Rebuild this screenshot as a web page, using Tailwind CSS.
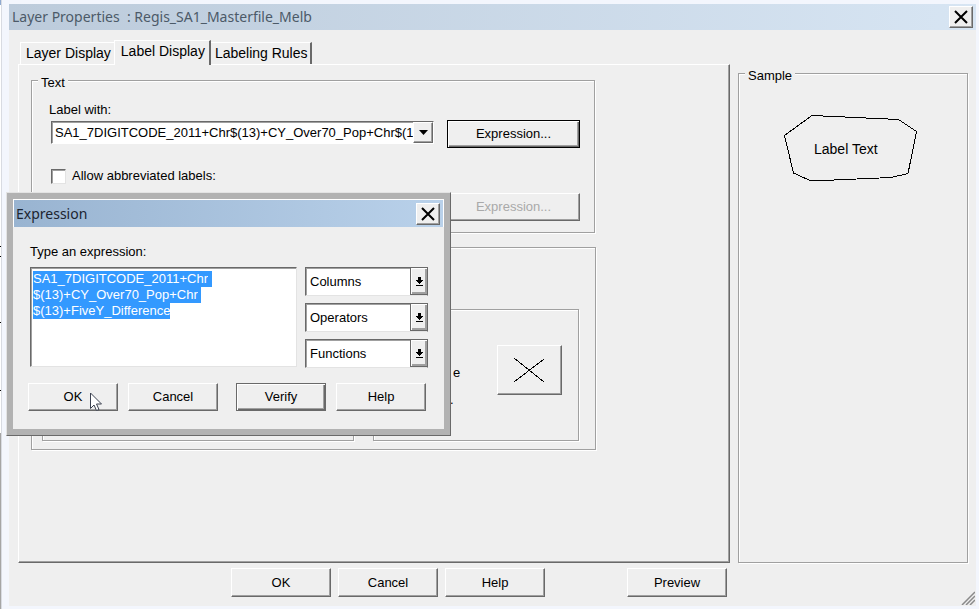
<!DOCTYPE html>
<html lang="en">

<head>
    <title>Layer Properties</title>

    <meta charset="UTF-8" />
    <meta name="viewport" content="width=device-width, initial-scale=1.0" />
    <script src="https://cdn.jsdelivr.net/npm/@tailwindcss/browser@4"></script>
</head>

<body class="min-h-screen flex bg-[#f3f6fd] font-['Liberation_Sans',Arial,sans-serif] text-[13px] leading-4 text-black overflow-hidden">
    <!-- edge of the window behind -->
    <div class="w-[2px] shrink-0 bg-white border-r border-[#d8dbe2] flex flex-col">
        <div class="h-[5px] bg-[#8fa9cf]"></div>
        <div class="mt-[241px] h-px bg-black"></div>
        <div class="mt-[9px] h-px bg-black"></div>
        <div class="mt-[65px] h-px bg-black"></div>
        <div class="mt-[67px] h-px bg-black"></div>
        <div class="mt-[42px] grow bg-[#a5a5a5]"></div>
    </div>

    <main class="relative grow flex flex-col mt-1 ml-[7px] mr-[3px] mb-[3px] bg-[#efefef]">
        <header class="h-[26px] flex items-center justify-between px-[3px] bg-linear-to-r from-[#bccbdb] to-[#d7e5f3] font-['Noto_Sans','Open_Sans',sans-serif] text-[14px] text-[#4c5a68]">
            <h1 class="whitespace-pre">Layer Properties  : Regis_SA1_Masterfile_Melb</h1>
            <button type="button" aria-label="Close" class="w-6 h-[22px] flex items-center justify-center bg-[#efefef] border border-t-white border-l-white border-r-[#696969] border-b-[#696969] shadow-[inset_-1px_-1px_0_#a0a0a0]">
                <svg class="size-[14px]" viewBox="0 0 14 14" stroke="#000" stroke-width="2" fill="none"><path d="M1 1l12 12M13 1L1 13" /></svg>
            </button>
        </header>

        <div class="grow flex pl-[9px] pr-2 pt-[10px]">
            <div class="grow flex flex-col">
                <div role="tablist" class="flex items-end h-6 pl-[2px]">
                    <button type="button" role="tab" class="h-[22px] pb-px pl-[5px] pr-[3px] text-[14px] border-t border-l border-white">Layer Display</button>
                    <button type="button" role="tab" aria-selected="true" class="relative z-10 h-[25px] -mb-px pb-1 pl-[6px] pr-1 text-[14px] bg-[#efefef] border-t border-l border-t-white border-l-white border-r-2 border-r-[#696969]">Label Display</button>
                    <button type="button" role="tab" class="h-[22px] pb-px pl-1 pr-[2px] text-[14px] border-t border-t-white border-r-2 border-r-[#696969]">Labeling Rules</button>
                </div>

                <section class="grow flex flex-col items-start pl-3 pt-[15px] border border-t-white border-l-white border-r-[#696969] border-b-[#696969] shadow-[inset_-1px_-1px_0_#a0a0a0]">
                    <fieldset class="relative w-[564px] h-[153px] pl-[17px] border border-[#a0a0a0] shadow-[1px_1px_0_#fff,inset_1px_1px_0_#fff]">
                        <legend class="absolute -top-[6px] left-[6px] px-[3px] bg-[#efefef]">Text</legend>
                        <label for="label-with" class="block mt-[21px]">Label with:</label>
                        <div class="flex items-start mt-[2px] pl-[2px]">
                            <div class="flex w-[383px] h-[23px] mt-px bg-white border border-t-[#696969] border-l-[#696969] border-r-white border-b-white shadow-[inset_1px_1px_0_#a0a0a0]">
                                <select id="label-with" class="appearance-none grow min-w-0 pl-[3px] outline-none">
                                    <option>SA1_7DIGITCODE_2011+Chr$(13)+CY_Over70_Pop+Chr$(13)+FiveY_Difference</option>
                                </select>
                                <span class="w-5 h-[21px] shrink-0 flex items-center justify-center bg-[#efefef] border border-t-white border-l-white border-r-[#696969] border-b-[#696969] shadow-[inset_-1px_-1px_0_#a0a0a0]">
                                    <svg class="w-[9px] h-[5px]" viewBox="0 0 9 5"><path d="M0 0h9L4.500 5z" /></svg>
                                </span>
                            </div>
                            <button type="button" class="w-[133px] h-7 ml-[13px] border border-black shadow-[inset_1px_1px_0_#fff,inset_-1px_-1px_0_#696969,inset_-2px_-2px_0_#a0a0a0]">Expression...</button>
                        </div>
                        <div class="flex items-center mt-5 pl-[2px] gap-[6px]">
                            <input type="checkbox" id="abbrev" class="appearance-none size-[15px] bg-white border border-t-[#696969] border-l-[#696969] border-r-[#e3e3e3] border-b-[#e3e3e3] shadow-[inset_1px_1px_0_#a0a0a0]" />
                            <label for="abbrev">Allow abbreviated labels:</label>
                        </div>
                        <button type="button" disabled class="block w-[133px] h-7 mt-[9px] ml-[398px] text-[#a9a9a9] border border-t-white border-l-white border-r-[#696969] border-b-[#696969] shadow-[inset_-1px_-1px_0_#a0a0a0]">Expression...</button>
                    </fieldset>

                    <fieldset class="w-[565px] h-[203px] mt-[14px] pl-[10px] pt-[61px] border border-[#a0a0a0] shadow-[1px_1px_0_#fff,inset_1px_1px_0_#fff]">
                        <div class="flex h-[132px]">
                            <div class="w-[312px] border border-[#a0a0a0] shadow-[1px_1px_0_#fff,inset_1px_1px_0_#fff]"></div>
                            <div class="w-[206px] ml-[19px] pl-[79px] pr-4 pt-[35px] flex items-start justify-between border border-[#a0a0a0] shadow-[1px_1px_0_#fff,inset_1px_1px_0_#fff]">
                                <div class="mt-5">
                                    <div>e</div>
                                    <div class="mt-[11px] -ml-[3px]">.</div>
                                </div>
                                <button type="button" aria-label="Line style" class="w-[65px] h-[50px] flex items-center justify-center border border-t-white border-l-white border-r-[#696969] border-b-[#696969] shadow-[inset_-1px_-1px_0_#a0a0a0]">
                                    <svg class="w-8 h-[26px]" viewBox="0 0 32 26" stroke="#000" fill="none" shape-rendering="crispEdges"><path d="M0 1l30 24M30 2L0 25" /></svg>
                                </button>
                            </div>
                        </div>
                    </fieldset>
                </section>
            </div>

            <fieldset class="relative w-[230px] shrink-0 ml-2 mt-[33px] pt-[41px] border border-[#a0a0a0] shadow-[1px_1px_0_#fff,inset_1px_1px_0_#fff]">
                <legend class="absolute -top-[6px] left-[6px] px-[3px] bg-[#efefef]">Sample</legend>
                <svg class="w-[134px] h-[68px] ml-[45px]" viewBox="0 0 134 68" fill="none" stroke="#000">
                    <path shape-rendering="crispEdges" d="M28 0.500L114.500 4.500L132.500 16.500L124 58.500L107 62.500L27 66L9.500 58L0.500 20.500z" />
                    <text x="30" y="39" font-size="14" fill="#000" stroke="none">Label Text</text>
                </svg>
            </fieldset>
        </div>

        <footer class="relative flex pl-[222px] pt-[5px] pb-[9px] gap-[7px]">
            <button type="button" class="w-[100px] h-[29px] border border-t-white border-l-white border-r-[#696969] border-b-[#696969] shadow-[inset_-1px_-1px_0_#a0a0a0]">OK</button>
            <button type="button" class="w-[100px] h-[29px] border border-t-white border-l-white border-r-[#696969] border-b-[#696969] shadow-[inset_-1px_-1px_0_#a0a0a0]">Cancel</button>
            <button type="button" class="w-[100px] h-[29px] border border-t-white border-l-white border-r-[#696969] border-b-[#696969] shadow-[inset_-1px_-1px_0_#a0a0a0]">Help</button>
            <button type="button" class="w-[100px] h-[29px] ml-auto mr-[249px] border border-t-white border-l-white border-r-[#696969] border-b-[#696969] shadow-[inset_-1px_-1px_0_#a0a0a0]">Preview</button>
            <svg class="absolute right-[1px] bottom-[1px] size-[14px]" viewBox="0 0 14 14" stroke="#8a8a8a" stroke-width="1.500"><path d="M1 14L14 1M5 14l9-9M9 14l5-5" /></svg>
        </footer>
    </main>

    <!-- expression dialog -->
    <div role="dialog" aria-labelledby="dialog-title" class="absolute left-[6px] top-48 w-[445px] bg-[#efefef] border border-t-[#e3e3e3] border-l-[#e3e3e3] border-r-[#696969] border-b-[#696969]">
        <div class="border-[#b2b2b2] border-6">
            <header class="h-7 flex items-center justify-between pl-[2px] pr-[3px] border border-white border-b-0 bg-linear-to-r from-[#99b4d1] to-[#b9d1ea] font-['Noto_Sans','Open_Sans',sans-serif] text-[14px] text-[#1c2430]">
                <h2 id="dialog-title">Expression</h2>
                <button type="button" aria-label="Close" class="w-6 h-[22px] flex items-center justify-center bg-[#efefef] border border-t-white border-l-white border-r-[#696969] border-b-[#696969] shadow-[inset_-1px_-1px_0_#a0a0a0]">
                    <svg class="size-[14px]" viewBox="0 0 14 14" stroke="#000" stroke-width="2" fill="none"><path d="M1 1l12 12M13 1L1 13" /></svg>
                </button>
            </header>
            <div class="px-[15px] pt-[17px] pb-[18px]">
                <label for="expression" class="block pl-[2px]">Type an expression:</label>
                <div class="flex justify-between items-start pl-[2px] pr-px mt-[7px]">
                    <textarea id="expression" spellcheck="false" class="block w-[267px] h-[100px] pl-[2px] pt-[3px] resize-none overflow-hidden outline-none bg-white selection:bg-[#3399ff] selection:text-white border border-t-[#696969] border-l-[#696969] border-r-[#e3e3e3] border-b-[#e3e3e3] shadow-[inset_1px_1px_0_#a0a0a0]">SA1_7DIGITCODE_2011+Chr
$(13)+CY_Over70_Pop+Chr
$(13)+FiveY_Difference</textarea>
                    <div class="flex flex-col gap-[7px]">
                        <div class="flex w-[123px] h-[29px] bg-white border border-t-[#696969] border-l-[#696969] border-r-[#696969] border-b-[#e3e3e3] shadow-[inset_1px_1px_0_#a0a0a0]">
                            <select aria-label="Columns" class="appearance-none grow min-w-0 pl-1 outline-none">
                                <option>Columns</option>
                            </select>
                            <span class="w-[17px] shrink-0 flex items-center justify-center bg-[#efefef] border-l border-b border-[#696969] shadow-[inset_1px_1px_0_#fff,inset_-2px_-2px_0_#a0a0a0]">
                                <svg class="w-[7px] h-[9px]" viewBox="0 0 7 9" shape-rendering="crispEdges"><path d="M2 0h3v3h2v1h-1v1h-1v1h-1v1h-1v-1h-1v-1h-1v-1h-1v-1h2zM0 8h7v1h-7z" /></svg>
                            </span>
                        </div>
                        <div class="flex w-[123px] h-[29px] bg-white border border-t-[#696969] border-l-[#696969] border-r-[#696969] border-b-[#e3e3e3] shadow-[inset_1px_1px_0_#a0a0a0]">
                            <select aria-label="Operators" class="appearance-none grow min-w-0 pl-1 outline-none">
                                <option>Operators</option>
                            </select>
                            <span class="w-[17px] shrink-0 flex items-center justify-center bg-[#efefef] border-l border-b border-[#696969] shadow-[inset_1px_1px_0_#fff,inset_-2px_-2px_0_#a0a0a0]">
                                <svg class="w-[7px] h-[9px]" viewBox="0 0 7 9" shape-rendering="crispEdges"><path d="M2 0h3v3h2v1h-1v1h-1v1h-1v1h-1v-1h-1v-1h-1v-1h-1v-1h2zM0 8h7v1h-7z" /></svg>
                            </span>
                        </div>
                        <div class="flex w-[123px] h-[29px] bg-white border border-t-[#696969] border-l-[#696969] border-r-[#696969] border-b-[#e3e3e3] shadow-[inset_1px_1px_0_#a0a0a0]">
                            <select aria-label="Functions" class="appearance-none grow min-w-0 pl-1 outline-none">
                                <option>Functions</option>
                            </select>
                            <span class="w-[17px] shrink-0 flex items-center justify-center bg-[#efefef] border-l border-b border-[#696969] shadow-[inset_1px_1px_0_#fff,inset_-2px_-2px_0_#a0a0a0]">
                                <svg class="w-[7px] h-[9px]" viewBox="0 0 7 9" shape-rendering="crispEdges"><path d="M2 0h3v3h2v1h-1v1h-1v1h-1v1h-1v-1h-1v-1h-1v-1h-1v-1h2zM0 8h7v1h-7z" /></svg>
                            </span>
                        </div>
                    </div>
                </div>
                <div class="flex gap-[10px] mt-[15px]">
                    <button type="button" class="w-[90px] h-7 border border-t-white border-l-white border-r-[#696969] border-b-[#696969] shadow-[inset_-1px_-1px_0_#a0a0a0]">OK</button>
                    <button type="button" class="w-[90px] h-7 mr-2 border border-t-white border-l-white border-r-[#696969] border-b-[#696969] shadow-[inset_-1px_-1px_0_#a0a0a0]">Cancel</button>
                    <button type="button" class="w-[90px] h-7 border border-[#696969] shadow-[inset_1px_1px_0_#fff,inset_-1px_-1px_0_#696969,inset_-2px_-2px_0_#a0a0a0]">Verify</button>
                    <button type="button" class="w-[90px] h-7 border border-t-white border-l-white border-r-[#696969] border-b-[#696969] shadow-[inset_-1px_-1px_0_#a0a0a0]">Help</button>
                </div>
            </div>
        </div>
    </div>

    <!-- mouse pointer -->
    <svg class="absolute left-[90px] top-[392px] w-3 h-[19px] pointer-events-none" viewBox="0 0 12 19" fill="#fff" stroke="#3c4250"><path d="M0.500 1v15.500l3.500-3.500 2.500 5.500 2.500-1-2.500-5.500h5z" /></svg>

    <script type="text/javascript">
        var expression = document.getElementById("expression")

        window.onload = function () {
            expression.focus()
            expression.select()
        }
    </script>
</body>

</html>
